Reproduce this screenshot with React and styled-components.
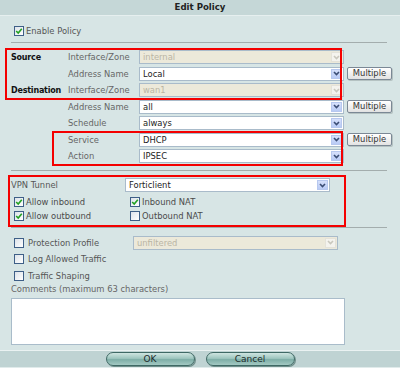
import styled, { createGlobalStyle } from "styled-components";

const GlobalStyle = createGlobalStyle`
  html, body {
    margin: 0;
    background: #d7e5e5;
  }
  body {
    font-family: "DejaVu Sans", Verdana, sans-serif;
    font-size: 8.4px;
    color: #555;
  }
`;

const Page = styled.div`
  width: 400px;
  height: 368px;
  display: flex;
  flex-direction: column;
  overflow: hidden;
`;

const TitleBar = styled.div`
  height: 15px;
  line-height: 15px;
  background: #c5d7d7;
  border-bottom: 1px solid #e6efef;
  text-align: center;
  font-weight: bold;
  font-size: 8.6px;
  color: #222;
`;

const Body = styled.div`
  padding: 0 13px 0 11px;
  display: flex;
  flex-direction: column;
`;

const Rule = styled.div`
  height: 1px;
  background: #a3adad;
  margin-top: ${(p) => p.$mt}px;
`;

const CheckRow = styled.div`
  display: flex;
  align-items: center;
  gap: 2px;
  height: 10px;
  padding-left: 3px;
  margin-top: ${(p) => p.$mt || 0}px;
  color: #555;
`;

const Box = styled.span`
  width: 10px;
  height: 10px;
  box-sizing: border-box;
  border: 1px solid #3e5f87;
  background: linear-gradient(135deg, #dde3ea, #ffffff);
  display: inline-flex;
  align-items: center;
  justify-content: center;
  flex: none;
`;

const Checkbox = ({ checked }) => (
  <Box>
    {checked && (
      <svg width="8" height="8" viewBox="0 0 8 8">
        <path d="M1.2 4 L3.2 6 L6.8 1.8" fill="none" stroke="#21a121" strokeWidth="1.6" />
      </svg>
    )}
  </Box>
);

const FieldGrid = styled.div`
  position: relative;
  display: grid;
  grid-template-columns: 54px 68px 205px 45px;
  column-gap: 3px;
  row-gap: 2.5px;
  grid-auto-rows: 14px;
  align-items: center;
  margin-top: ${(p) => p.$mt || 0}px;
`;

const Mark = styled.div`
  position: absolute;
  left: ${(p) => p.$l}px;
  top: ${(p) => p.$t}px;
  width: ${(p) => p.$w}px;
  height: ${(p) => p.$h}px;
  box-sizing: border-box;
  border: 2px solid #f40000;
  pointer-events: none;
  z-index: 2;
`;

const Section = styled.span`
  font-weight: bold;
  font-size: 8px;
  letter-spacing: -0.2px;
  color: #111;
  white-space: nowrap;
`;

const Label = styled.span`
  color: #666;
  white-space: nowrap;
`;

const SelectBox = styled.div`
  display: flex;
  align-items: center;
  height: 14px;
  box-sizing: border-box;
  border: 1px solid #a9bbca;
  background: ${(p) => (p.$disabled ? "#ece9da" : "#fff")};
  color: ${(p) => (p.$disabled ? "#bab5a4" : "#222")};
  padding: 0 1px 0 3px;
  width: 205px;
`;

const SelectValue = styled.span`
  flex: 1;
`;

const Arrow = styled.span`
  width: 11px;
  height: 10px;
  box-sizing: border-box;
  display: flex;
  align-items: center;
  justify-content: center;
  border: 1px solid ${(p) => (p.$disabled ? "#e4e2d9" : "#b7c8ef")};
  background: ${(p) => (p.$disabled ? "#f4f3ee" : "linear-gradient(#d6e0fb, #b9cbf5)")};
`;

const Select = ({ value, disabled }) => (
  <SelectBox $disabled={disabled}>
    <SelectValue>{value}</SelectValue>
    <Arrow $disabled={disabled}>
      <svg width="7" height="5" viewBox="0 0 7 5">
        <path
          d="M1 1 L3.5 3.5 L6 1"
          fill="none"
          stroke={disabled ? "#c9c7bd" : "#3b4d74"}
          strokeWidth="1.6"
        />
      </svg>
    </Arrow>
  </SelectBox>
);

const MultiButton = styled.button`
  height: 13px;
  width: 45px;
  padding: 0;
  box-sizing: border-box;
  border: 1px solid #7b8895;
  border-radius: 2px;
  background: linear-gradient(#ffffff, #e2e2e2);
  box-shadow: 1px 1px 0 #b5c2c2;
  font: inherit;
  color: #333;
  line-height: 11px;
`;

const VpnSection = styled.div`
  position: relative;
  margin-top: 7px;
  display: flex;
  flex-direction: column;
`;

const VpnRow = styled.div`
  display: grid;
  grid-template-columns: 114px 205px;
  align-items: center;
  height: 14px;
  color: #555;
`;

const CheckGrid = styled.div`
  display: grid;
  grid-template-columns: 116px auto;
  grid-auto-rows: 12px;
  row-gap: 2px;
  margin-top: 3.5px;
  padding-left: 3px;
`;

const CheckItem = styled.label`
  display: flex;
  align-items: center;
  gap: 2px;
  color: #4a4a4a;
  white-space: nowrap;
`;

const OptionRow = styled.div`
  display: grid;
  grid-template-columns: 119px 205px;
  align-items: center;
  height: 14px;
  padding-left: 3px;
  margin-top: ${(p) => p.$mt || 0}px;
`;

const OptionLabel = styled.span`
  display: flex;
  align-items: center;
  gap: 4px;
  color: #555;
  white-space: nowrap;
`;

const CommentLabel = styled.div`
  height: 12px;
  line-height: 12px;
  color: #666;
`;

const Comments = styled.div`
  margin-top: 3px;
  width: 334px;
  height: 47px;
  box-sizing: border-box;
  border: 1px solid #a9bcca;
  background: #fff;
`;

const Footer = styled.div`
  margin-top: 5px;
  height: 18px;
  border-top: 1px solid #eaf2f2;
  border-bottom: 1px solid #e0ebeb;
  background: #bfd3d3;
  display: flex;
  align-items: center;
  justify-content: center;
  gap: 11px;
`;

const PillButton = styled.button`
  width: 89px;
  height: 14px;
  padding: 0;
  border-radius: 7px;
  border: 1px solid #3f6965;
  background: linear-gradient(#cfe5e1, #9ec6bf 45%, #7eaea7 55%, #a3c9c3);
  box-shadow: 1px 1px 0 #6f8f8b;
  font: inherit;
  font-size: 9px;
  line-height: 12px;
  color: #1d2b2b;
`;

const rows = [
  { section: "Source", label: "Interface/Zone", value: "internal", disabled: true },
  { label: "Address Name", value: "Local", multiple: true },
  { section: "Destination", label: "Interface/Zone", value: "wan1", disabled: true },
];

const Row = ({ section, label, value, disabled, multiple }) => (
  <>
    <Section>{section}</Section>
    <Label>{label}</Label>
    <Select value={value} disabled={disabled} />
    {multiple ? <MultiButton>Multiple</MultiButton> : <span />}
  </>
);

export default function App() {
  return (
    <Page>
      <GlobalStyle />
      <TitleBar>Edit Policy</TitleBar>
      <Body>
        <CheckRow $mt={10}>
          <Checkbox checked />
          Enable Policy
        </CheckRow>
        <Rule $mt={6} />

        <FieldGrid $mt={7}>
          {rows.map((r, i) => (
            <Row key={i} {...r} />
          ))}
          <Mark $l={-6} $t={-2} $w={337} $h={52} />
        </FieldGrid>

        <FieldGrid $mt={2.5}>
          <Row label="Address Name" value="all" multiple />
          <Row label="Schedule" value="always" />
        </FieldGrid>

        <FieldGrid $mt={2.5}>
          <Row label="Service" value="DHCP" multiple />
          <Row label="Action" value="IPSEC" />
          <Mark $l={41} $t={-1.5} $w={291} $h={35} />
        </FieldGrid>

        <Rule $mt={7} />

        <VpnSection>
          <VpnRow>
            <span>VPN Tunnel</span>
            <Select value="Forticlient" />
          </VpnRow>
          <CheckGrid>
            <CheckItem>
              <Checkbox checked />
              Allow inbound
            </CheckItem>
            <CheckItem>
              <Checkbox checked />
              Inbound NAT
            </CheckItem>
            <CheckItem>
              <Checkbox checked />
              Allow outbound
            </CheckItem>
            <CheckItem>
              <Checkbox />
              Outbound NAT
            </CheckItem>
          </CheckGrid>
          <Mark $l={-3} $t={-3} $w={338} $h={52} />
        </VpnSection>

        <Rule $mt={5} />

        <OptionRow $mt={8}>
          <OptionLabel>
            <Checkbox />
            Protection Profile
          </OptionLabel>
          <Select value="unfiltered" disabled />
        </OptionRow>
        <OptionRow $mt={2.5}>
          <OptionLabel>
            <Checkbox />
            Log Allowed Traffic
          </OptionLabel>
        </OptionRow>
        <OptionRow $mt={2.5}>
          <OptionLabel>
            <Checkbox />
            Traffic Shaping
          </OptionLabel>
        </OptionRow>

        <CommentLabel>Comments (maximum 63 characters)</CommentLabel>
        <Comments />
      </Body>
      <Footer>
        <PillButton>OK</PillButton>
        <PillButton>Cancel</PillButton>
      </Footer>
    </Page>
  );
}
